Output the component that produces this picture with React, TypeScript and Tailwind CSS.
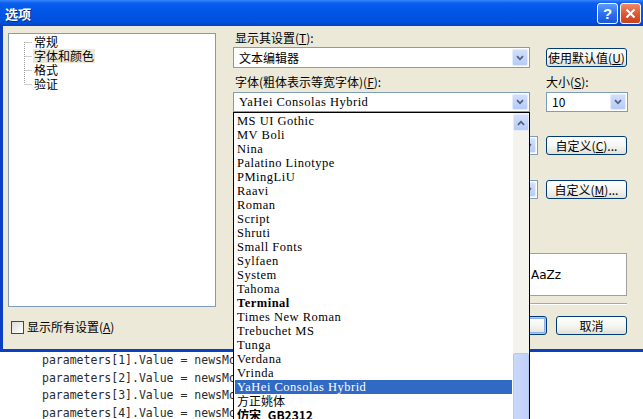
import React from "react";

const fontItems: { name: string; bold?: boolean; cjk?: boolean; selected?: boolean }[] = [
  { name: "MS UI Gothic" },
  { name: "MV Boli" },
  { name: "Nina" },
  { name: "Palatino Linotype" },
  { name: "PMingLiU" },
  { name: "Raavi" },
  { name: "Roman" },
  { name: "Script" },
  { name: "Shruti" },
  { name: "Small Fonts" },
  { name: "Sylfaen" },
  { name: "System" },
  { name: "Tahoma" },
  { name: "Terminal", bold: true },
  { name: "Times New Roman" },
  { name: "Trebuchet MS" },
  { name: "Tunga" },
  { name: "Verdana" },
  { name: "Vrinda" },
  { name: "YaHei Consolas Hybrid", selected: true },
  { name: "方正姚体", cjk: true },
  { name: "仿宋_GB2312", cjk: true, bold: true },
];

const codeLines = [
  "parameters[1].Value = newsModel.Title;",
  "parameters[2].Value = newsModel.Content;",
  "parameters[3].Value = newsModel.Author;",
  "parameters[4].Value = newsModel.AddTime;",
];

const listFont = "font-['Liberation_Serif',serif] text-[12.5px] tracking-[0.5px]";

function ComboArrow() {
  return (
    <div className="w-[16px] h-full rounded-[2px] border border-[#e4ecfd] bg-[linear-gradient(to_bottom,#d2dffb,#b6cbf7)] flex items-center justify-center">
      <svg width="8" height="6" viewBox="0 0 8 6">
        <path d="M1 1.2 L4 4.3 L7 1.2" stroke="#4d6185" strokeWidth="1.8" fill="none" />
      </svg>
    </div>
  );
}

function Combo({ text, className = "", mono = false }: { text?: string; className?: string; mono?: boolean }) {
  return (
    <div className={`bg-white border border-[#7f9db9] flex items-stretch p-[1px] ${className}`}>
      <div className={`flex-1 flex items-center pl-[4px] text-black ${mono ? listFont : "text-[12px]"}`}>{text}</div>
      <ComboArrow />
    </div>
  );
}

function XpButton({ children, className = "", isDefault = false }: { children?: React.ReactNode; className?: string; isDefault?: boolean }) {
  return (
    <div
      className={`border border-[#003c74] rounded-[3px] bg-[linear-gradient(to_bottom,#ffffff,#f4f4f0_55%,#e3dfd4)] flex items-center justify-center text-[12px] text-black ${
        isDefault ? "shadow-[inset_0_0_0_1px_#b0c6f0,inset_0_0_0_2px_#8fb0eb]" : ""
      } ${className}`}
    >
      {children}
    </div>
  );
}

export default function App() {
  return (
    <div className="relative w-[643px] h-[419px] overflow-hidden bg-white font-['Noto_Sans_CJK_SC','Noto_Sans',sans-serif]">
      {/* Dialog */}
      <div className="h-[352px] flex flex-col">
        {/* Title bar */}
        <div className="h-[26px] flex items-center pl-[5px] pr-[2px] bg-[linear-gradient(to_bottom,#3a86ff,#0a5df0_12%,#0055e5_50%,#0050dc_85%,#0042c4)]">
          <span className="text-white font-bold text-[13px] leading-none [text-shadow:1px_1px_0_#0a2a80]">选项</span>
          <div className="ml-auto flex gap-[2px]">
            <div className="w-[21px] h-[21px] rounded-[3px] border border-white bg-[linear-gradient(to_bottom,#5e9cff,#2f6ff0_50%,#1a56d8)] flex items-center justify-center text-white font-['Liberation_Sans',sans-serif] font-bold text-[15px] leading-none">
              ?
            </div>
            <div className="w-[21px] h-[21px] rounded-[3px] border border-white bg-[linear-gradient(to_bottom,#f08a6a,#e05a33_50%,#c8401c)] flex items-center justify-center">
              <svg width="11" height="11" viewBox="0 0 11 11">
                <path d="M1.5 1.5 L9.5 9.5 M9.5 1.5 L1.5 9.5" stroke="white" strokeWidth="2" />
              </svg>
            </div>
          </div>
        </div>

        {/* Body */}
        <div className="flex-1 flex bg-[#ece9d8] border-l-[3px] border-b-[3px] border-[#0a3fc4]">
          {/* Left column */}
          <div className="w-[225px] pl-[5px] pt-[7px] flex flex-col">
            <div className="relative w-[208px] h-[274px] bg-white border border-[#7f9db9] pt-[1px]">
              <svg className="absolute left-0 top-0" width="30" height="60">
                <path d="M15.5 8 V50 M15.5 8.5 H23 M15.5 22.5 H23 M15.5 36.5 H23 M15.5 50.5 H23" stroke="#9a9a9a" strokeDasharray="1 1" fill="none" />
              </svg>
              {["常规", "字体和颜色", "格式", "验证"].map((t) => (
                <div key={t} className="h-[14px] flex items-center pl-[24px] text-[12px] leading-none text-black">
                  <span className={`px-[1px] py-[1px] ${t === "字体和颜色" ? "bg-[#ece9d8]" : ""}`}>{t}</span>
                </div>
              ))}
            </div>
            <div className="mt-[11px] ml-[3px] flex items-center gap-[3px] text-[12px] text-black">
              <div className="w-[13px] h-[13px] border border-[#1c5180] bg-[linear-gradient(135deg,#dcdcd6,#ffffff)]" />
              <span>
                显示所有设置(<u>A</u>)
              </span>
            </div>
          </div>

          {/* Right column */}
          <div className="w-[395px] ml-[5px] pt-[4px] flex flex-col text-[12px] text-black">
            <div className="h-[15px] flex items-center pl-[2px]">
              显示其设置(<u>T</u>):
            </div>
            <div className="mt-[2px] flex gap-[16px] h-[21px]">
              <Combo text="文本编辑器" className="w-[297px]" />
              <XpButton className="w-[81px] h-[19px] mt-[1px]">
                使用默认值(<u>U</u>)
              </XpButton>
            </div>
            <div className="mt-[5px] h-[15px] flex">
              <span className="w-[313px] pl-[2px]">
                字体(粗体表示等宽字体)(<u>F</u>):
              </span>
              <span>
                大小(<u>S</u>):
              </span>
            </div>
            <div className="mt-[4px] flex gap-[16px] h-[20px]">
              <Combo text="YaHei Consolas Hybrid" mono className="w-[297px]" />
              <Combo text="10" className="w-[82px]" />
            </div>
            <div className="mt-[24px] flex gap-[8px] h-[19px]">
              <Combo className="w-[305px]" />
              <XpButton className="w-[81px]">
                自定义(<u>C</u>)...
              </XpButton>
            </div>
            <div className="mt-[25px] flex gap-[8px] h-[19px]">
              <Combo className="w-[305px]" />
              <XpButton className="w-[81px]">
                自定义(<u>M</u>)...
              </XpButton>
            </div>
            <div className="mt-[54px] w-[394px] h-[43px] bg-white border border-[#a0a0a0] flex items-center pl-[297px] font-['DejaVu_Sans',sans-serif] text-[12px]">
              AaZz
            </div>
            <div className="mt-[7px] w-[394px] h-[2px] border-t border-[#aca899] border-b border-b-white" />
            <div className="mt-[11px] flex justify-end gap-[9px] pr-[1px]">
              <XpButton isDefault className="w-[78px] h-[19px]">
                确定
              </XpButton>
              <XpButton className="w-[71px] h-[19px]">取消</XpButton>
            </div>
          </div>
        </div>
      </div>

      {/* Code editor behind the dialog */}
      <div className="pl-[42px] font-['DejaVu_Sans_Mono',monospace] text-[11.5px] leading-[17.7px] text-[#2b2b2b] whitespace-pre">
        {codeLines.map((l) => (
          <div key={l}>{l}</div>
        ))}
      </div>

      {/* Open font dropdown */}
      <div className="absolute left-[233px] top-[112px] w-[297px] h-[330px] bg-white border border-black flex">
        <div className="flex-1 pt-[1px] px-[1px]">
          {fontItems.map((f) => (
            <div
              key={f.name}
              className={`h-[14px] flex items-center pl-[2px] leading-none whitespace-nowrap ${
                f.selected ? "bg-[#316ac5] text-white" : "text-black"
              } ${f.cjk ? "text-[12px]" : listFont} ${f.bold ? "font-bold" : ""}`}
            >
              {f.name}
            </div>
          ))}
        </div>
        <div className="w-[16px] flex flex-col bg-[#f4f3ee]">
          <div className="mt-[1px] h-[17px] rounded-[2px] border border-[#e4ecfd] bg-[linear-gradient(to_bottom,#d2dffb,#b6cbf7)] flex items-center justify-center">
            <svg width="8" height="6" viewBox="0 0 8 6">
              <path d="M1 4.8 L4 1.7 L7 4.8" stroke="#4d6185" strokeWidth="1.8" fill="none" />
            </svg>
          </div>
          <div className="mt-[222px] flex-1 rounded-[2px] border border-[#b3c8f4] bg-[linear-gradient(to_right,#c9d8fc,#bfd1fb)]" />
        </div>
      </div>
    </div>
  );
}
